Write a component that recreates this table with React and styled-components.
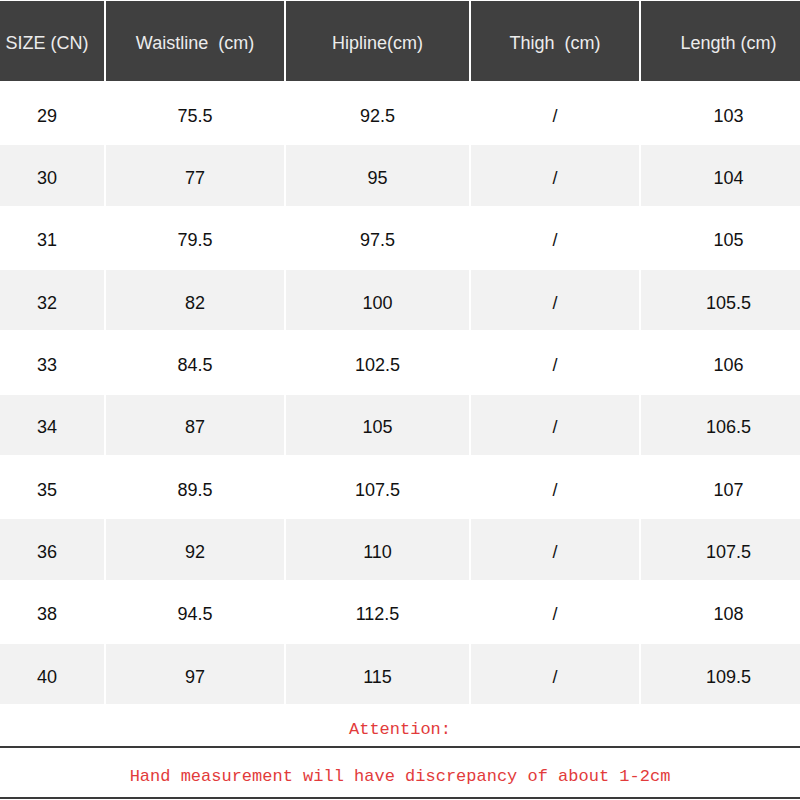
import React from "react";
import styled, { createGlobalStyle } from "styled-components";

const GlobalStyle = createGlobalStyle`
  html, body {
    margin: 0;
    padding: 0;
    background: #ffffff;
  }
  body {
    width: 800px;
    height: 800px;
    overflow: hidden;
  }
`;

const Sheet = styled.div`
  width: 800px;
  height: 800px;
  display: flex;
  flex-direction: column;
  background: #ffffff;
  font-family: "Liberation Sans", Arial, sans-serif;
`;

const Grid = styled.div`
  display: grid;
  grid-template-columns: 104px 178px 183px 168px 1fr;
  column-gap: 2px;
  row-gap: 2px;
  padding-top: 1px;
`;

// first and last columns are a little off-centre in the picture
const align = (col) =>
  col === 0 ? "padding-right: 10px;" : col === 4 ? "padding-left: 16px;" : "";

const HeadCell = styled.div`
  height: 80px;
  box-sizing: border-box;
  padding-top: 5px;
  display: flex;
  align-items: center;
  justify-content: center;
  background: #404040;
  color: #ececec;
  font-size: 18px;
  white-space: pre;
  ${(p) => align(p.$col)}
`;

const Cell = styled.div`
  height: 60.33px;
  box-sizing: border-box;
  padding-top: 6px;
  display: flex;
  align-items: center;
  justify-content: center;
  background: ${(p) => (p.$shade ? "#f2f2f2" : "#ffffff")};
  color: #111111;
  font-size: 18px;
  ${(p) => align(p.$col)}
`;

const Note = styled.div`
  display: flex;
  align-items: center;
  justify-content: center;
  height: ${(p) => p.$h}px;
  padding-top: ${(p) => p.$pt}px;
  border-bottom: 2px solid #3a3a3a;
  color: #e23b3b;
  font-family: "Liberation Mono", "Courier New", monospace;
  font-size: 17px;
  box-sizing: border-box;
`;

const headers = [
  "SIZE (CN)",
  "Waistline  (cm)",
  "Hipline(cm)",
  "Thigh  (cm)",
  "Length (cm)",
];

const rows = [
  ["29", "75.5", "92.5", "/", "103"],
  ["30", "77", "95", "/", "104"],
  ["31", "79.5", "97.5", "/", "105"],
  ["32", "82", "100", "/", "105.5"],
  ["33", "84.5", "102.5", "/", "106"],
  ["34", "87", "105", "/", "106.5"],
  ["35", "89.5", "107.5", "/", "107"],
  ["36", "92", "110", "/", "107.5"],
  ["38", "94.5", "112.5", "/", "108"],
  ["40", "97", "115", "/", "109.5"],
];

const App = () => {
  return (
    <Sheet>
      <GlobalStyle />
      <Grid>
        {headers.map((h, j) => (
          <HeadCell key={h} $col={j}>
            {h}
          </HeadCell>
        ))}
        {rows.map((r, i) =>
          r.map((v, j) => (
            <Cell key={i + "-" + j} $shade={i % 2 === 1} $col={j}>
              {v}
            </Cell>
          ))
        )}
      </Grid>
      <Note $h={44} $pt={9}>
        Attention:
      </Note>
      <Note $h={51} $pt={7}>
        Hand measurement will have discrepancy of about 1-2cm
      </Note>
    </Sheet>
  );
};

export default App;
